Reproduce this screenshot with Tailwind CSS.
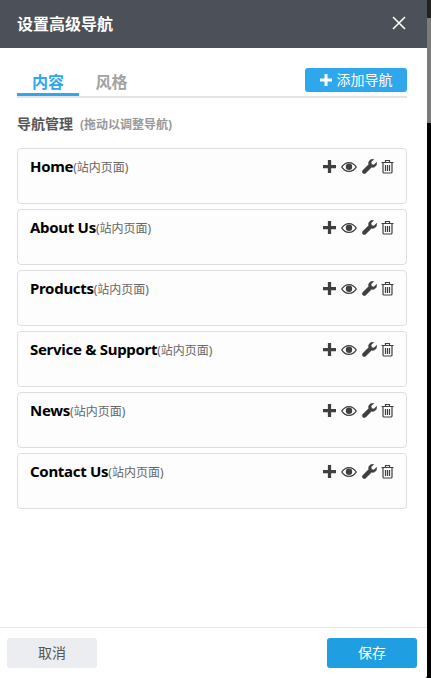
<!DOCTYPE html>
<html lang="zh-CN">
<head>
    <meta charset="UTF-8">
    <meta name="viewport" content="width=device-width, initial-scale=1.0">
    <title>设置高级导航</title>
    <script src="https://cdn.jsdelivr.net/npm/@tailwindcss/browser@4"></script>
</head>
<body class="relative h-[678px] w-[431px] overflow-hidden bg-black font-['Noto_Sans','Noto_Sans_CJK_SC',sans-serif]">
    <!-- 右侧露出的页面背景 -->
    <div class="absolute right-0 top-0 h-[123px] w-1 bg-[#7b7b7b]">
        <div class="h-[18px] bg-[#222]"></div>
    </div>

    <div class="flex h-[678px] w-[427px] flex-col rounded-br-[2px] bg-white">
        <!-- 标题栏 -->
        <header class="flex h-12 shrink-0 items-center justify-between bg-[#4c5058] pl-[17px] pr-[21px]">
            <h1 class="text-base font-bold text-white">设置高级导航</h1>
            <svg class="mb-[2px] h-[14px] w-[14px]" viewBox="0 0 14 14" fill="none" stroke="#fff" stroke-width="1.6"><path d="M1 1l12 12M13 1L1 13"/></svg>
        </header>

        <main class="flex-1 pl-[17px] pr-5">
            <!-- 标签 -->
            <div class="mt-5 flex h-[30px] items-end justify-between border-b-2 border-[#e3e4e6]">
                <div class="flex h-[30px]">
                    <div class="-mb-0.5 h-[30px] w-[62px] border-b-[3px] border-[#2ea7ec] pt-1 text-center text-base font-bold text-[#2ea7ec]">内容</div>
                    <div class="w-[65px] pt-1 text-center text-base font-bold text-[#a3a3a3]">风格</div>
                </div>
                <button class="mb-1 flex h-6 w-[102px] items-center justify-center gap-[5px] rounded-[3px] bg-[#2ea7ec] text-sm text-white">
                    <svg class="h-3 w-3" viewBox="0 0 12 12" fill="#fff"><path d="M4.500 0h3v4.500H12v3H7.500V12h-3V7.500H0v-3h4.500z"/></svg>
                    添加导航
                </button>
            </div>

            <p class="mt-4 flex items-baseline gap-[7px] font-bold text-[#555]">
                <span class="text-sm">导航管理</span>
                <span class="text-xs text-[#999]">(拖动以调整导航)</span>
            </p>

            <!-- 导航列表 -->
            <ul id="nav-list" class="mt-[14px] flex flex-col gap-[5px]"></ul>
        </main>

        <!-- 底部按钮 -->
        <footer class="flex h-[51px] shrink-0 items-start justify-between border-t border-[#e6e6e6] pl-[7px] pr-[10px] pt-[10px]">
            <button class="h-[30px] w-[90px] rounded-[3px] bg-[#ecedf1] text-sm text-[#555]">取消</button>
            <button class="h-[30px] w-[90px] rounded-[3px] bg-[#1f9ee1] text-sm text-white">保存</button>
        </footer>
    </div>

    <template id="nav-item">
        <li class="flex h-14 items-start justify-between rounded-[4px] border border-[#dedede] bg-[#fdfdfd] pl-3 pr-3 pt-[6px]">
            <p class="flex items-baseline"><strong class="nav-name text-[15px] tracking-[-0.3px] text-black"></strong><span class="text-xs text-[#666]">(站内页面)</span></p>
            <div class="flex items-start gap-[5px] pt-1">
                <svg class="mt-px h-[13px] w-[13px]" viewBox="0 0 12 12" fill="#3f3f3f"><path d="M4.500 0h3v4.500H12v3H7.500V12h-3V7.500H0v-3h4.500z"/></svg>
                <svg class="mt-[2px] h-[12px] w-4" viewBox="0 0 16 12" fill="#3f3f3f"><path fill-rule="evenodd" d="M8 1c3.400 0 6.200 2 8 5-1.800 3-4.600 5-8 5S1.800 9 0 6c1.800-3 4.600-5 8-5zM8 2.200C5.400 2.200 3.100 3.600 1.500 6c1.600 2.400 3.900 3.800 6.500 3.800s4.900-1.400 6.500-3.800C12.900 3.600 10.600 2.200 8 2.200z"/><circle cx="8" cy="5.700" r="3.200"/></svg>
                <svg class="h-[15px] w-[15px]" viewBox="0 0 15 15" fill="#3f3f3f" stroke="#3f3f3f" stroke-width="0.5"><path d="M14.600 3.300c.3 1.500-.1 3-1.200 4-1 1-2.500 1.400-3.900 1L3.700 14.100c-.8.800-2 .8-2.800 0-.8-.8-.8-2 0-2.800L6.700 5.500c-.4-1.400 0-2.900 1-3.900C8.700.5 10.200.1 11.700.4L9 3.100l.6 2.300 2.300.6z"/></svg>
                <svg class="-ml-px h-[15px] w-[13px]" viewBox="0 0 13 15" fill="none" stroke="#3f3f3f" stroke-width="1.200"><path d="M.5 3.500h12M4.500 3.500V1.500h4v2M2 3.500v9.500a1 1 0 0 0 1 1h7a1 1 0 0 0 1-1V3.500M4.500 6v6M6.500 6v6M8.500 6v6"/></svg>
            </div>
        </li>
    </template>

    <script>
        // 导航项只有名称不同
        const navNames = ['Home', 'About Us', 'Products', 'Service & Support', 'News', 'Contact Us'];
        const navList = document.getElementById('nav-list');
        const navItem = document.getElementById('nav-item');

        navNames.forEach((name) => {
            const row = navItem.content.cloneNode(true);
            row.querySelector('.nav-name').textContent = name;
            navList.appendChild(row);
        });
    </script>
</body>
</html>
